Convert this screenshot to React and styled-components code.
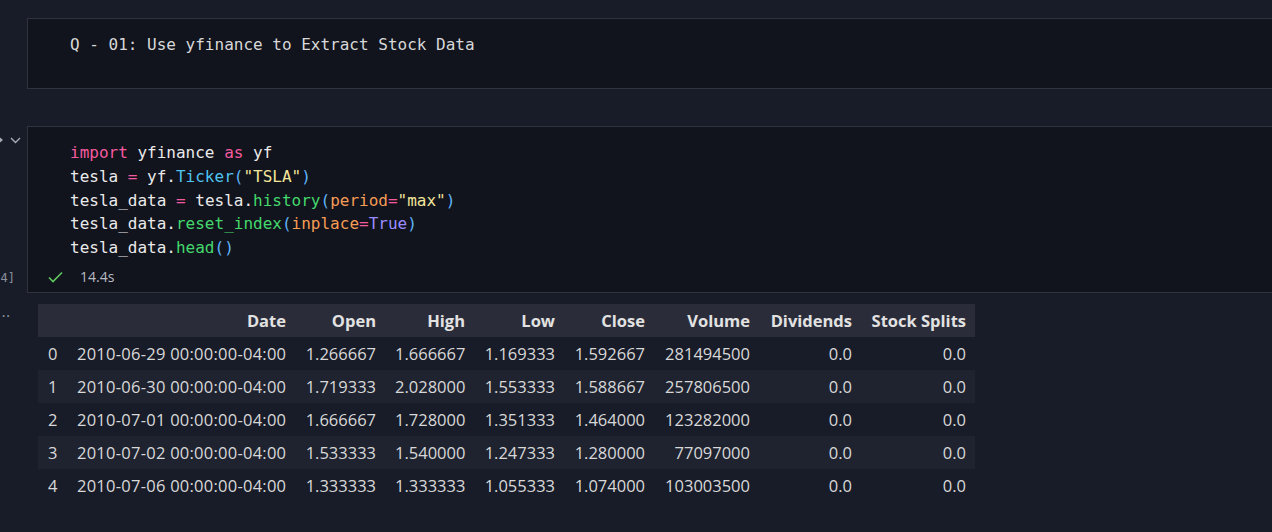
import React from "react";
import styled, { createGlobalStyle } from "styled-components";

const Global = createGlobalStyle`
  html, body { margin: 0; padding: 0; background: #181c28; overflow: hidden; }
  body { width: 1272px; height: 532px; }
`;

const Page = styled.div`
  display: flex;
  flex-direction: column;
  padding-top: 18px;
`;

const CellRow = styled.div`
  display: grid;
  grid-template-columns: 27px 1fr;
  margin-top: ${(p) => p.$mt || 0}px;
`;

const Gutter = styled.div`
  display: flex;
  flex-direction: column;
  justify-content: space-between;
  align-items: flex-end;
  color: #8a8f9a;
  font-family: "DejaVu Sans Mono", monospace;
  font-size: 12px;
`;

const GutterTop = styled.div`
  display: flex;
  align-items: center;
  height: 28px;
  padding-right: 6px;
`;

const ExecCount = styled.div`
  height: 22px;
  line-height: 22px;
  margin-bottom: 4px;
  padding-right: 12px;
  white-space: nowrap;
`;

const Cell = styled.div`
  background: #11131d;
  border: 1px solid #2f333e;
  border-right: none;
`;

const MarkdownBody = styled.div`
  padding: 14px 0 31px 42px;
  font-family: "DejaVu Sans Mono", monospace;
  font-size: 16px;
  line-height: 24px;
  color: #d8d8d8;
  white-space: pre;
`;

const CodeBody = styled.pre`
  margin: 0;
  padding: 14px 0 0 42px;
  font-family: "DejaVu Sans Mono", monospace;
  font-size: 16px;
  line-height: 23.75px;
  color: #eaeaea;
`;

const Tok = styled.span`
  color: ${(p) => p.$c};
`;

const Status = styled.div`
  display: flex;
  align-items: center;
  height: 22px;
  margin-top: 6px;
  margin-bottom: 4px;
  padding-left: 20px;
  gap: 17px;
  font-family: "Open Sans", sans-serif;
  font-size: 14px;
  font-weight: 500;
  color: #b9bcc3;
`;

const OutputRow = styled.div`
  display: grid;
  grid-template-columns: 38px 1fr;
  margin-top: 11px;
`;

const Ellipsis = styled.div`
  color: #9aa0aa;
  font-family: "Open Sans", sans-serif;
  font-size: 14px;
  line-height: 14px;
  padding-top: 1px;
  margin-left: -3px;
  letter-spacing: 1px;
`;

const Table = styled.table`
  border-collapse: collapse;
  table-layout: fixed;
  width: 937px;
  font-family: "Open Sans", sans-serif;
  font-size: 16.5px;
  color: #d8d8d8;
`;

const HeadRow = styled.tr`
  background: #2a2d39;
  height: 33px;
`;

const BodyRow = styled.tr`
  background: ${(p) => (p.$odd ? "#1f2330" : "transparent")};
  height: 33px;
`;

const Th = styled.th`
  padding: 0 9px 0 10px;
  text-align: right;
  font-weight: 700;
  color: #e2e2e2;
  white-space: nowrap;
`;

const Td = styled.td`
  padding: 0 9px 0 10px;
  text-align: ${(p) => (p.$left ? "left" : "right")};
  letter-spacing: ${(p) => (p.$date ? "0.25px" : "0")};
  white-space: nowrap;
`;

const C = {
  kw: "#f45a9e",
  op: "#f45a9e",
  cls: "#4fc4f0",
  br: "#5fb4f6",
  str: "#f1e59a",
  fn: "#44d86c",
  param: "#f59c55",
  bool: "#9a8cff",
};

const cols = [29, 228, 90, 89, 90, 90, 105, 102, 114];
const headers = ["", "Date", "Open", "High", "Low", "Close", "Volume", "Dividends", "Stock Splits"];
const rows = [
  ["0", "2010-06-29 00:00:00-04:00", "1.266667", "1.666667", "1.169333", "1.592667", "281494500", "0.0", "0.0"],
  ["1", "2010-06-30 00:00:00-04:00", "1.719333", "2.028000", "1.553333", "1.588667", "257806500", "0.0", "0.0"],
  ["2", "2010-07-01 00:00:00-04:00", "1.666667", "1.728000", "1.351333", "1.464000", "123282000", "0.0", "0.0"],
  ["3", "2010-07-02 00:00:00-04:00", "1.533333", "1.540000", "1.247333", "1.280000", "77097000", "0.0", "0.0"],
  ["4", "2010-07-06 00:00:00-04:00", "1.333333", "1.333333", "1.055333", "1.074000", "103003500", "0.0", "0.0"],
];

function Chevron() {
  return (
    <svg width="11" height="7" viewBox="0 0 11 7">
      <path d="M1 1 L5.5 5.5 L10 1" fill="none" stroke="#a8acb4" strokeWidth="1.4" />
    </svg>
  );
}

function RunMark() {
  return (
    <svg width="12" height="8" viewBox="0 0 12 8" style={{ marginLeft: -6 }}>
      <path d="M2 1.5 L5 4 L2 6.5 Z" fill="#a8acb4" />
    </svg>
  );
}

function Check() {
  return (
    <svg width="15" height="12" viewBox="0 0 15 12">
      <path d="M1 6.5 L5 10.5 L14 1.5" fill="none" stroke="#5fc95f" strokeWidth="1.6" />
    </svg>
  );
}

export default function App() {
  return (
    <>
      <Global />
      <Page>
        <CellRow>
          <Gutter />
          <Cell>
            <MarkdownBody>Q - 01: Use yfinance to Extract Stock Data</MarkdownBody>
          </Cell>
        </CellRow>

        <CellRow $mt={37}>
          <Gutter>
            <GutterTop>
              <RunMark />
              <Chevron />
            </GutterTop>
            <ExecCount>[14]</ExecCount>
          </Gutter>
          <Cell>
            <CodeBody>
              <Tok $c={C.kw}>import</Tok> yfinance <Tok $c={C.kw}>as</Tok> yf{"\n"}
              tesla <Tok $c={C.op}>=</Tok> yf.<Tok $c={C.cls}>Ticker</Tok>
              <Tok $c={C.br}>(</Tok>
              <Tok $c={C.str}>"TSLA"</Tok>
              <Tok $c={C.br}>)</Tok>
              {"\n"}
              tesla_data <Tok $c={C.op}>=</Tok> tesla.<Tok $c={C.fn}>history</Tok>
              <Tok $c={C.br}>(</Tok>
              <Tok $c={C.param}>period</Tok>
              <Tok $c={C.op}>=</Tok>
              <Tok $c={C.str}>"max"</Tok>
              <Tok $c={C.br}>)</Tok>
              {"\n"}
              tesla_data.<Tok $c={C.fn}>reset_index</Tok>
              <Tok $c={C.br}>(</Tok>
              <Tok $c={C.param}>inplace</Tok>
              <Tok $c={C.op}>=</Tok>
              <Tok $c={C.bool}>True</Tok>
              <Tok $c={C.br}>)</Tok>
              {"\n"}
              tesla_data.<Tok $c={C.fn}>head</Tok>
              <Tok $c={C.br}>()</Tok>
            </CodeBody>
            <Status>
              <Check />
              <span>14.4s</span>
            </Status>
          </Cell>
        </CellRow>

        <OutputRow>
          <Ellipsis>...</Ellipsis>
          <div>
            <Table>
              <colgroup>
                {cols.map((w, i) => (
                  <col key={i} style={{ width: w }} />
                ))}
              </colgroup>
              <thead>
                <HeadRow>
                  {headers.map((h, i) => (
                    <Th key={i}>{h}</Th>
                  ))}
                </HeadRow>
              </thead>
              <tbody>
                {rows.map((r, ri) => (
                  <BodyRow key={ri} $odd={ri % 2 === 1}>
                    {r.map((v, ci) => (
                      <Td key={ci} $left={ci === 0} $date={ci === 1}>
                        {v}
                      </Td>
                    ))}
                  </BodyRow>
                ))}
              </tbody>
            </Table>
          </div>
        </OutputRow>
      </Page>
    </>
  );
}
